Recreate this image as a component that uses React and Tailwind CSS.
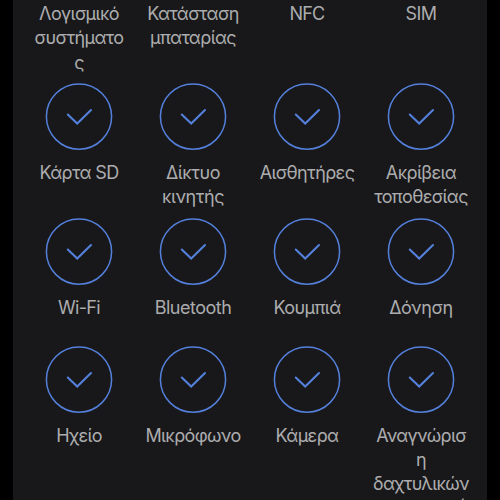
import React from 'react';

const rows = [
  {
    className: 'h-[81px]',
    hideIcon: true,
    items: [
      { lines: ['Λογισμικό', 'συστήματο', 'ς'] },
      { lines: ['Κατάσταση', 'μπαταρίας'] },
      { lines: ['NFC'], tracking: 'tracking-[-0.8px]' },
      { lines: ['SIM'] },
    ],
  },
  {
    className: 'h-[135px]',
    items: [
      { lines: ['Κάρτα SD'] },
      { lines: ['Δίκτυο', 'κινητής'], tracking: 'tracking-[-0.45px]' },
      { lines: ['Αισθητήρες'] },
      { lines: ['Ακρίβεια', 'τοποθεσίας'] },
    ],
  },
  {
    className: 'h-[128px]',
    items: [
      { lines: ['Wi-Fi'], tracking: 'tracking-[-0.7px]' },
      { lines: ['Bluetooth'], tracking: 'tracking-[-0.5px]' },
      { lines: ['Κουμπιά'] },
      { lines: ['Δόνηση'], tracking: 'tracking-[-0.4px]' },
    ],
  },
  {
    className: 'h-[154px]',
    items: [
      { lines: ['Ηχείο'], tracking: 'tracking-[-0.7px]' },
      { lines: ['Μικρόφωνο'], tracking: 'tracking-[-0.65px]' },
      { lines: ['Κάμερα'], tracking: 'tracking-[-0.6px]' },
      { lines: ['Αναγνώρισ', 'η', 'δαχτυλικών', 'αποτυπωμά'], tracking: 'tracking-[-0.7px]' },
    ],
  },
];

const CheckCircle = () => (
  <svg className="block h-[68px] w-[68px] shrink-0" viewBox="0 0 68 68" fill="none" stroke="#5480dc">
    <circle cx="34" cy="33.6" r="32.6" strokeWidth="1.5" />
    <path d="M22.8 31.6 32.2 40.6 46 27.1" strokeWidth="2.1" strokeLinecap="round" />
  </svg>
);

const TestItem = ({ lines, tracking = 'tracking-[-0.6px]', hideIcon }) => (
  <div className="flex flex-col items-center">
    {!hideIcon && <CheckCircle />}
    <div className={`text-center text-[18px] ${tracking} ${hideIcon ? 'leading-[24.6px]' : 'mt-[10.6px] leading-[24px]'}`}>
      {lines.map((line) => (
        <div key={line} className="whitespace-nowrap nth-4:-mt-[2px]">
          {line}
        </div>
      ))}
    </div>
  </div>
);

const App = () => (
  <div className="h-[500px] w-[500px] overflow-hidden bg-black px-[13px]">
    <div className="h-full bg-[#18181a] px-[9px] pt-[1.6px] font-['Inter','Noto_Sans',sans-serif] text-[#acacae]">
      {rows.map((row, i) => (
        <div key={i} className={`grid grid-cols-4 ${row.className}`}>
          {row.items.map((item) => (
            <TestItem key={item.lines[0]} {...item} hideIcon={row.hideIcon} />
          ))}
        </div>
      ))}
    </div>
  </div>
);

export default App;
